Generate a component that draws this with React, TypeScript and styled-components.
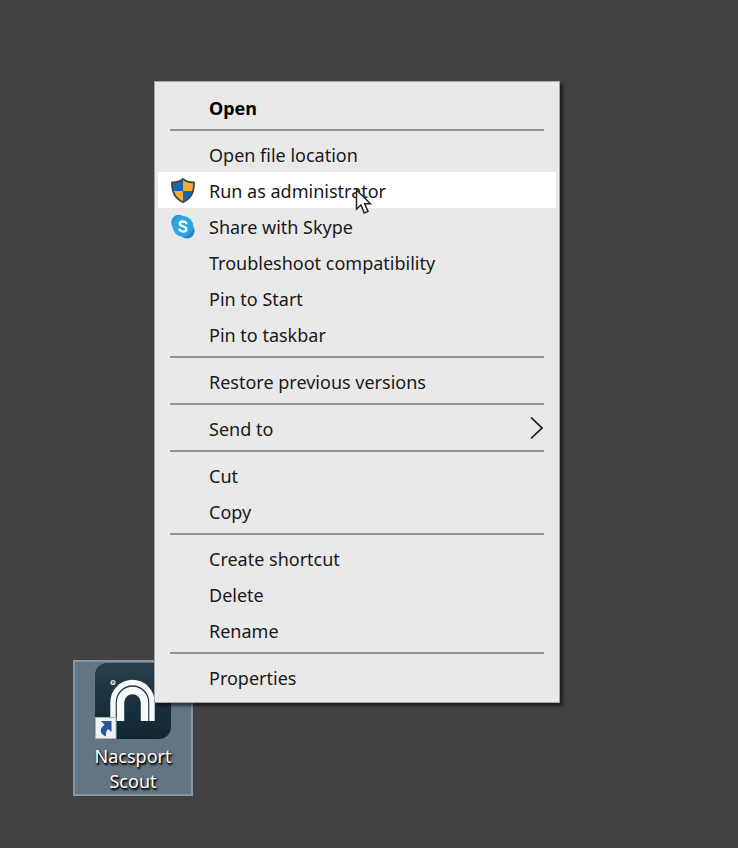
import React from "react";
import styled, { createGlobalStyle } from "styled-components";

const GlobalStyle = createGlobalStyle`
  *, *::before, *::after { box-sizing: border-box; }
  body {
    margin: 0;
    background: #424242;
    font-family: "Noto Sans", "Open Sans", sans-serif;
  }
`;

const Desktop = styled.main`
  position: relative;
  min-height: 100vh;
  overflow: hidden;
  background: #424242;
`;

const Shortcut = styled.button`
  position: absolute;
  left: 73px;
  top: 660px;
  width: 120px;
  display: flex;
  flex-direction: column;
  align-items: center;
  gap: 5px;
  padding: 1px 4px 0;
  border: 2px solid #8795a2;
  background: #637482;
  color: #fff;
  font-family: inherit;
  font-size: 18px;
  line-height: 25px;
  text-align: center;
  text-shadow: 1px 2px 2px #000, 1px 1px 2px #111;
`;

const ShortcutArt = styled.svg`
  display: block;
  width: 76px;
  height: 76px;
`;

const ShortcutName = styled.span`
  width: 84px;
`;

const Menu = styled.div`
  position: absolute;
  left: 154px;
  top: 81px;
  width: 406px;
  padding: 7px 3px;
  border: 1px solid #a5a5a5;
  background: #e9e9e9;
  box-shadow: 3px 3px 3px rgba(0, 0, 0, 0.55);
`;

const Item = styled.button<{ $bold?: boolean; $active?: boolean }>`
  display: grid;
  grid-template-columns: 51px 1fr 26px;
  align-items: center;
  width: 100%;
  height: 36px;
  padding: 1px 0 0;
  border: 0;
  background: ${(p) => (p.$active ? "#fff" : "transparent")};
  color: ${(p) => (p.$bold ? "#000" : "#191919")};
  font-family: inherit;
  font-size: 18px;
  font-weight: ${(p) => (p.$bold ? 700 : 400)};
  line-height: 26px;
  text-align: left;
  white-space: nowrap;
`;

const IconSlot = styled.span`
  display: flex;
  padding-left: 12px;
`;

const Separator = styled.hr`
  height: 2px;
  margin: 4px 12px 5px;
  border: 0;
  background: #929292;
`;

const Pointer = styled.svg`
  position: absolute;
  left: 355px;
  top: 188px;
  width: 17px;
  height: 28px;
  pointer-events: none;
`;

const ShieldIcon = () => (
  <svg width="26" height="26" viewBox="0 0 26 26" aria-hidden="true">
    <defs>
      <clipPath id="shield">
        <path d="M13 1C10 3.5 6 4.5 2 4.5C2 13.5 4 19.5 13 24.3C22 19.5 24 13.5 24 4.5C20 4.5 16 3.5 13 1Z" />
      </clipPath>
    </defs>
    <g clipPath="url(#shield)">
      <path d="M0 0H13V13H0ZM13 13H26V26H13Z" fill="#1467b8" />
      <path d="M13 0H26V13H13ZM0 13H13V26H0Z" fill="#f5ae2c" />
    </g>
    <path
      d="M13 1C10 3.5 6 4.5 2 4.5C2 13.5 4 19.5 13 24.3C22 19.5 24 13.5 24 4.5C20 4.5 16 3.5 13 1Z"
      fill="none"
      stroke="#41484a"
      strokeWidth="1.8"
    />
  </svg>
);

const SkypeIcon = () => (
  <svg width="26" height="26" viewBox="0 0 26 26" aria-hidden="true">
    <circle cx="8.8" cy="8.3" r="7.6" fill="#2f9bd6" />
    <circle cx="17" cy="16.8" r="7.6" fill="#1f86c9" />
    <circle cx="13" cy="12.5" r="10.4" fill="#2aa6e0" />
    <path
      d="M16.4 9.2C15.6 8 14.4 7.5 13 7.5C11 7.5 9.8 8.3 9.8 9.8C9.8 13 16.4 11.6 16.4 15C16.4 16.6 15 17.5 13 17.5C11.3 17.5 10 16.8 9.4 15.4"
      fill="none"
      stroke="#fff"
      strokeWidth="2.3"
      strokeLinecap="round"
    />
  </svg>
);

const ArrowIcon = () => (
  <svg width="14" height="24" viewBox="0 0 14 24" aria-hidden="true">
    <path d="M1 0.5L12 11L1 21.5" fill="none" stroke="#151515" strokeWidth="1.7" />
  </svg>
);

const NacsportIcon = () => (
  <ShortcutArt viewBox="0 0 76 76" aria-hidden="true">
    <defs>
      <linearGradient id="tile" x1="0" y1="0" x2="0" y2="1">
        <stop offset="0" stopColor="#263f4b" />
        <stop offset="1" stopColor="#102631" />
      </linearGradient>
    </defs>
    <rect width="76" height="76" rx="12" fill="url(#tile)" />
    <path d="M18 58V39.5a19.5 20 0 0 1 39 0V58" fill="none" stroke="#f7f8f8" strokeWidth="5.4" />
    <path d="M25.5 58V39.5a12 12 0 0 1 24 0V58" fill="none" stroke="#f7f8f8" strokeWidth="7.4" />
    <circle cx="18" cy="19.5" r="2" fill="#6d808a" stroke="#dfe5e8" strokeWidth="1.2" />
    <rect x="0.5" y="54.5" width="20.5" height="21" fill="#eef1f5" stroke="#aab2bb" />
    <path
      d="M6 58H16.5V69L13.4 66C10.8 68 10.4 70.5 11.2 73.5C5 71.5 3.6 66 9.6 61.8Z"
      fill="#285492"
    />
  </ShortcutArt>
);

type Entry = {
  label: string;
  icon?: React.ReactNode;
  bold?: boolean;
  active?: boolean;
  submenu?: boolean;
};

const groups: Entry[][] = [
  [{ label: "Open", bold: true }],
  [
    { label: "Open file location" },
    { label: "Run as administrator", icon: <ShieldIcon />, active: true },
    { label: "Share with Skype", icon: <SkypeIcon /> },
    { label: "Troubleshoot compatibility" },
    { label: "Pin to Start" },
    { label: "Pin to taskbar" },
  ],
  [{ label: "Restore previous versions" }],
  [{ label: "Send to", submenu: true }],
  [{ label: "Cut" }, { label: "Copy" }],
  [{ label: "Create shortcut" }, { label: "Delete" }, { label: "Rename" }],
  [{ label: "Properties" }],
];

export default function App() {
  return (
    <Desktop>
      <GlobalStyle />
      <Shortcut type="button">
        <NacsportIcon />
        <ShortcutName>Nacsport Scout</ShortcutName>
      </Shortcut>
      <Menu role="menu" aria-label="Shortcut actions">
        {groups.map((group, index) => (
          <React.Fragment key={group[0].label}>
            {index > 0 && <Separator />}
            {group.map((entry) => (
              <Item
                key={entry.label}
                type="button"
                role="menuitem"
                aria-haspopup={entry.submenu ? "menu" : undefined}
                $bold={entry.bold}
                $active={entry.active}
              >
                <IconSlot>{entry.icon}</IconSlot>
                <span>{entry.label}</span>
                {entry.submenu && <ArrowIcon />}
              </Item>
            ))}
          </React.Fragment>
        ))}
      </Menu>
      <Pointer viewBox="0 0 17 28" aria-hidden="true">
        <path
          d="M1.5 2V21L6 17L9.2 25L13 23.4L9.7 15.8H15.5Z"
          fill="#fff"
          stroke="#252525"
          strokeWidth="1.5"
        />
      </Pointer>
    </Desktop>
  );
}
